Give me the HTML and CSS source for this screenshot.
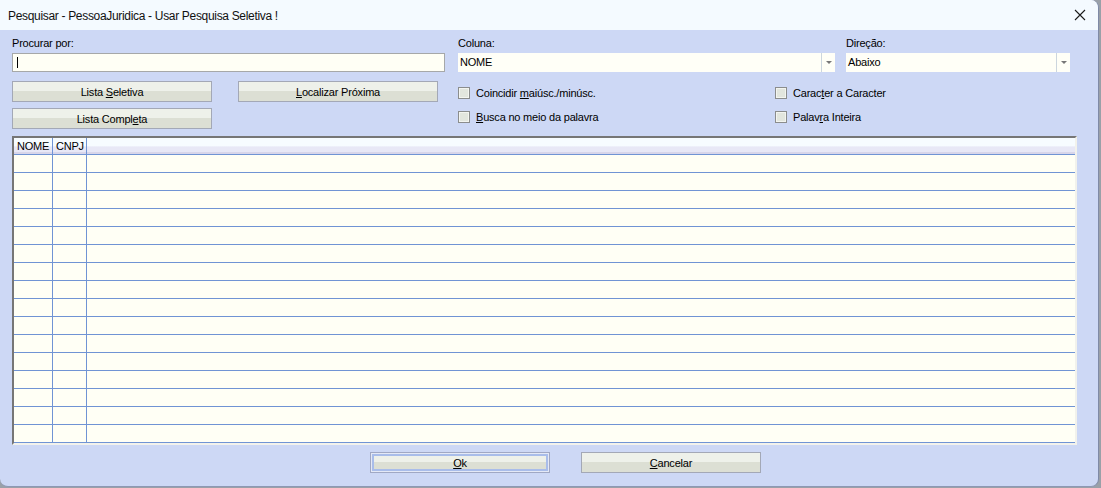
FILE: index.html
```html
<!DOCTYPE html>
<html lang="pt">
<head>
<meta charset="utf-8">
<title>Pesquisar</title>
<link rel="stylesheet" href="styles.css">
</head>
<body>
<div class="window">
  <div class="titlebar">
    <span class="title">Pesquisar - PessoaJuridica - Usar Pesquisa Seletiva !</span>
    <svg class="close" width="12" height="12" viewBox="0 0 12 12"><path d="M1 1 L11 11 M11 1 L1 11" stroke="#1a1a1a" stroke-width="1.1" fill="none"/></svg>
  </div>
  <div class="client">
    <div class="fields">
      <div class="field f-search">
        <div class="label">Procurar por:</div>
        <div class="input"><span class="caret"></span></div>
      </div>
      <div class="field f-col">
        <div class="label">Coluna:</div>
        <div class="combo"><span class="value">NOME</span><span class="drop"><span class="arrow"></span></span></div>
      </div>
      <div class="field f-dir">
        <div class="label">Direção:</div>
        <div class="combo"><span class="value">Abaixo</span><span class="drop"><span class="arrow"></span></span></div>
      </div>
    </div>
    <div class="options">
      <div class="btncol">
        <div class="btn"><span>Lista <u>S</u>eletiva</span></div>
        <div class="btn"><span>Lista Compl<u>e</u>ta</span></div>
      </div>
      <div class="btncol b2">
        <div class="btn"><span><u>L</u>ocalizar Próxima</span></div>
      </div>
      <div class="checks chk-a">
        <div class="check"><span class="box"></span><span>Coincidir <u>m</u>aiúsc./minúsc.</span></div>
        <div class="check"><span class="box"></span><span><u>B</u>usca no meio da palavra</span></div>
      </div>
      <div class="checks chk-b">
        <div class="check"><span class="box"></span><span>Carac<u>t</u>er a Caracter</span></div>
        <div class="check"><span class="box"></span><span>Palav<u>r</u>a Inteira</span></div>
      </div>
    </div>
    <div class="grid">
      <div class="row head"><div class="c c1">NOME</div><div class="c c2">CNPJ</div><div class="c c3"></div></div>
      <div class="row"><div class="c c1"></div><div class="c c2"></div><div class="c c3"></div></div>
      <div class="row"><div class="c c1"></div><div class="c c2"></div><div class="c c3"></div></div>
      <div class="row"><div class="c c1"></div><div class="c c2"></div><div class="c c3"></div></div>
      <div class="row"><div class="c c1"></div><div class="c c2"></div><div class="c c3"></div></div>
      <div class="row"><div class="c c1"></div><div class="c c2"></div><div class="c c3"></div></div>
      <div class="row"><div class="c c1"></div><div class="c c2"></div><div class="c c3"></div></div>
      <div class="row"><div class="c c1"></div><div class="c c2"></div><div class="c c3"></div></div>
      <div class="row"><div class="c c1"></div><div class="c c2"></div><div class="c c3"></div></div>
      <div class="row"><div class="c c1"></div><div class="c c2"></div><div class="c c3"></div></div>
      <div class="row"><div class="c c1"></div><div class="c c2"></div><div class="c c3"></div></div>
      <div class="row"><div class="c c1"></div><div class="c c2"></div><div class="c c3"></div></div>
      <div class="row"><div class="c c1"></div><div class="c c2"></div><div class="c c3"></div></div>
      <div class="row"><div class="c c1"></div><div class="c c2"></div><div class="c c3"></div></div>
      <div class="row"><div class="c c1"></div><div class="c c2"></div><div class="c c3"></div></div>
      <div class="row"><div class="c c1"></div><div class="c c2"></div><div class="c c3"></div></div>
      <div class="row"><div class="c c1"></div><div class="c c2"></div><div class="c c3"></div></div>
    </div>
    <div class="footer">
      <div class="btn ok"><span><u>O</u>k</span></div>
      <div class="btn cancel"><span><u>C</u>ancelar</span></div>
    </div>
  </div>
</div>
</body>
</html>
```

FILE: styles.css
```css
html, body {
  margin: 0;
  padding: 0;
}
body {
  width: 1101px;
  height: 488px;
  overflow: hidden;
  background: #9aa0a8;
  font-family: "Liberation Sans", Arial, sans-serif;
  font-size: 11px;
  letter-spacing: -0.2px;
  color: #000;
}
.window {
  width: 1098px;
  height: 486px;
  border-right: 1px solid #7f8aa6;
  border-bottom: 1px solid #8e98b4;
  border-radius: 0 8px 8px 8px;
  overflow: hidden;
  background: #cdd8f5;
  display: flex;
  flex-direction: column;
}
.titlebar {
  height: 30px;
  flex: none;
  background: #f4faff;
  display: flex;
  align-items: center;
  padding-left: 8px;
  padding-right: 12px;
}
.title {
  flex: 1;
  font-size: 12px;
  letter-spacing: -0.32px;
  color: #111;
  padding-top: 1px;
}
.close {
  display: block;
}
.client {
  flex: 1;
  padding: 6px 0 0 12px;
  display: flex;
  flex-direction: column;
}
.fields {
  display: flex;
}
.label {
  height: 14px;
  line-height: 14px;
  margin-bottom: 3px;
}
.f-search { width: 433px; }
.f-col { width: 377px; margin-left: 13px; }
.f-dir { width: 224px; margin-left: 11px; }
.input {
  box-sizing: border-box;
  height: 19px;
  border: 1px solid #a6a8a8;
  background: #fffff5;
  display: flex;
  align-items: center;
  padding-left: 4px;
}
.caret {
  width: 1px;
  height: 11px;
  background: #000;
}
.combo {
  box-sizing: border-box;
  height: 19px;
  background: #fffff7;
  display: flex;
  align-items: center;
}
.combo .value {
  flex: 1;
  padding-left: 2px;
  line-height: 19px;
}
.drop {
  width: 13px;
  height: 19px;
  border-left: 1px solid #ccd6de;
  display: flex;
  align-items: center;
  justify-content: center;
}
.arrow {
  width: 0;
  height: 0;
  border-left: 3px solid transparent;
  border-right: 3px solid transparent;
  border-top: 3px solid #777;
}
.options {
  display: flex;
  margin-top: 9px;
}
.btncol {
  width: 200px;
  display: flex;
  flex-direction: column;
  gap: 6px;
}
.btncol.b2 { margin-left: 26px; }
.btn {
  box-sizing: border-box;
  width: 200px;
  height: 21px;
  border: 1px solid #a3a8b6;
  background: linear-gradient(#eef1ea 0, #eef1ea 45%, #dcdfd4 50%, #dcdfd4 100%);
  display: flex;
  align-items: center;
  justify-content: center;
  line-height: 14px;
  padding-top: 1px;
}
.checks {
  display: flex;
  flex-direction: column;
}
.checks.chk-a { margin-left: 20px; width: 317px; }
.check {
  height: 24px;
  display: flex;
  align-items: center;
}
.box {
  box-sizing: border-box;
  width: 12px;
  height: 12px;
  border: 1px solid #8b8d8d;
  background: #e2e6de;
  box-shadow: inset 0 0 0 1px #f3f5f0;
  margin-right: 6px;
  margin-top: -1px;
  flex: none;
}
.grid {
  margin-top: 7px;
  width: 1065px;
  box-sizing: border-box;
  border-top: 2px solid #767676;
  border-left: 2px solid #767676;
  border-right: 2px solid #f2f2ec;
  border-bottom: 2px solid #f2f2ec;
  background: #fffff5;
  display: flex;
  flex-direction: column;
}
.row {
  display: flex;
  height: 18px;
  box-sizing: border-box;
  border-bottom: 1px solid #7094d4;
}
.row.head {
  height: 17px;
  background: linear-gradient(#f7fcff 0, #f7fcff 50%, #e8e8f6 55%, #e8e8f6 85%, #d8d6ea 90%, #d8d6ea 100%);
}
.c {
  box-sizing: border-box;
  height: 100%;
}
.c1 { width: 39px; border-right: 1px solid #7094d4; }
.c2 { width: 34px; border-right: 1px solid #7094d4; }
.c3 { flex: 1; }
.head .c {
  padding-left: 3px;
  line-height: 16px;
}
.footer {
  display: flex;
  margin-top: 7px;
  padding-left: 358px;
  gap: 31px;
}
.footer .btn {
  width: 180px;
}
.btn.ok {
  border: 1px solid #a0a8c4;
  box-shadow: inset 0 0 0 1px #e4e9f6, inset 0 0 0 3px #a9bdea;
}
```
